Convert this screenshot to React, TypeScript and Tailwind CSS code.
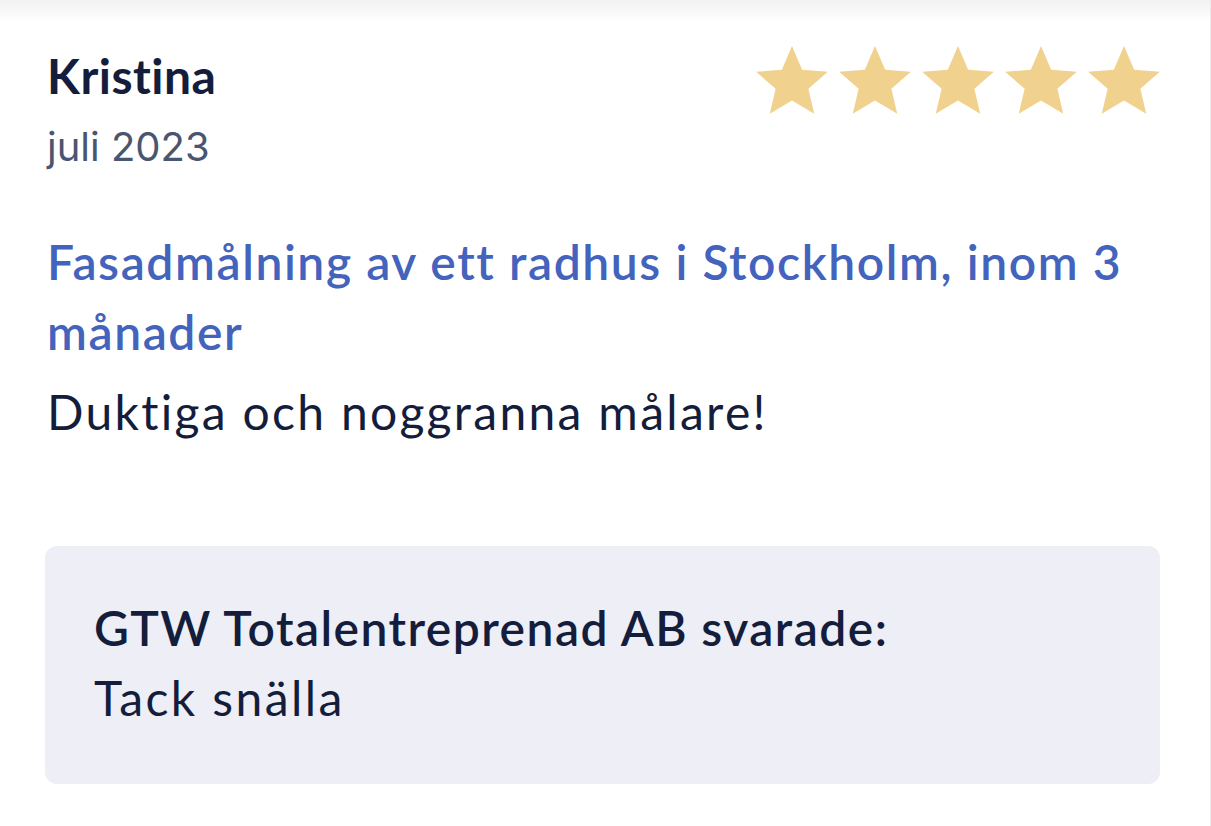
import React from 'react';

const Star = () => (
  <svg viewBox="0 0 24 24" className="w-[80px] h-[80px]" fill="#F1D18E">
    <path d="M12 1.2l3.05 7.1 7.7.66-5.84 5.06 1.76 7.53L12 17.55l-6.67 4 1.76-7.53L1.25 8.96l7.7-.66z" />
  </svg>
);

const App: React.FC = () => {
  return (
    <div className="w-[1211px] h-[826px] bg-white overflow-hidden border-r border-[#ebebeb]" style={{ fontFamily: 'Lato, "Noto Sans", sans-serif' }}>
      <div className="h-[22px] bg-gradient-to-b from-[#f2f2f2] to-white" />
      <div className="pl-[47px] pr-[50px]">
        <div className="flex justify-between items-start">
          <div>
            <h2 className="text-[48px] leading-[58px] font-bold text-[#141d3b] mt-[25px] tracking-[0.01em]">Kristina</h2>
            <p className="text-[40px] leading-[48px] text-[#4a5570] mt-[18px]" style={{ fontFamily: 'Inter, Roboto, sans-serif' }}>juli 2023</p>
          </div>
          <div className="flex gap-[3px] mt-[20px] -mr-[4px]">
            <Star />
            <Star />
            <Star />
            <Star />
            <Star />
          </div>
        </div>

        <h3 className="mt-[56px] text-[48px] leading-[70px] font-semibold text-[#4463bd] tracking-[0.033em]">
          Fasadmålning av ett radhus i Stockholm, inom 3 månader
        </h3>
        <p className="text-[48px] leading-[70px] text-[#141d3b] mt-[10px] tracking-[0.048em]">Duktiga och noggranna målare!</p>

        <div className="mt-[99px] -ml-[2px] bg-[#edeef6] rounded-[12px] h-[238px] pl-[49px] pt-[47px]">
          <p className="text-[48px] leading-[70px] font-semibold text-[#141d3b] tracking-[0.03em]">GTW Totalentreprenad AB svarade:</p>
          <p className="text-[48px] leading-[70px] text-[#141d3b] tracking-[0.05em]">Tack snälla</p>
        </div>
      </div>
    </div>
  );
};

export default App;
